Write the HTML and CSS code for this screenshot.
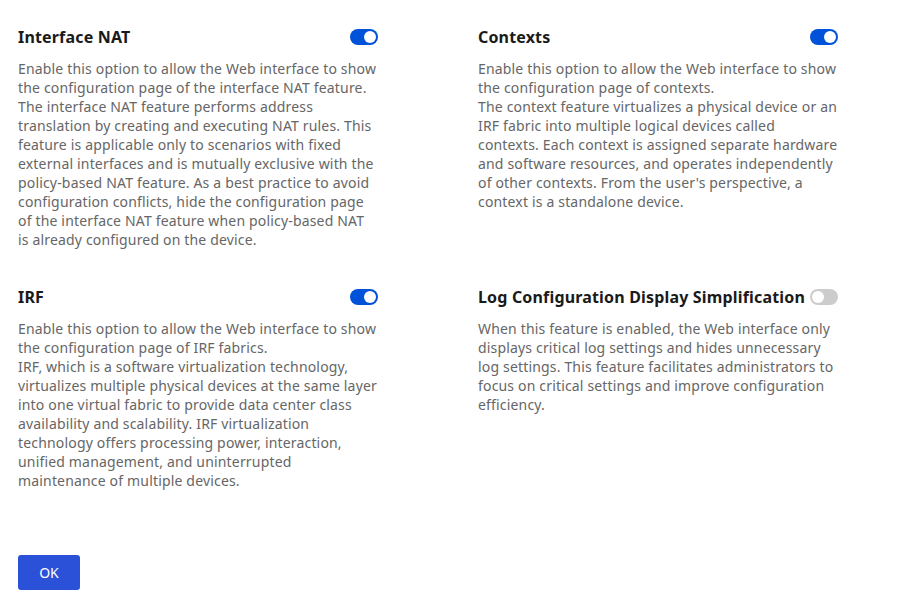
FILE: index.html
```html
<!DOCTYPE html>
<html lang="en">
<head>
  <meta charset="UTF-8" />
  <title>Feature Settings</title>
  <link rel="stylesheet" href="styles.css">
</head>
<body>
  <div class="grid">
    <section class="item">
      <div class="head">
        <h2>Interface NAT</h2>
        <span class="switch on"></span>
      </div>
      <p>Enable this option to allow the Web interface to show the configuration page of the interface NAT feature.<br>The interface NAT feature performs address translation by creating and executing NAT rules. This feature is applicable only to scenarios with fixed external interfaces and is mutually exclusive with the policy-based NAT feature. As a best practice to avoid configuration conflicts, hide the configuration page of the interface NAT feature when policy-based NAT is already configured on the device.</p>
    </section>

    <section class="item">
      <div class="head">
        <h2>Contexts</h2>
        <span class="switch on"></span>
      </div>
      <p>Enable this option to allow the Web interface to show the configuration page of contexts.<br>The context feature virtualizes a physical device or an IRF fabric into multiple logical devices called contexts. Each context is assigned separate hardware and software resources, and operates independently of other contexts. From the user's perspective, a context is a standalone device.</p>
    </section>

    <section class="item">
      <div class="head">
        <h2>IRF</h2>
        <span class="switch on"></span>
      </div>
      <p>Enable this option to allow the Web interface to show the configuration page of IRF fabrics.<br>IRF, which is a software virtualization technology, virtualizes multiple physical devices at the same layer into one virtual fabric to provide data center class availability and scalability. IRF virtualization technology offers processing power, interaction, unified management, and uninterrupted maintenance of multiple devices.</p>
    </section>

    <section class="item">
      <div class="head">
        <h2>Log Configuration Display Simplification</h2>
        <span class="switch"></span>
      </div>
      <p>When this feature is enabled, the Web interface only displays critical log settings and hides unnecessary log settings. This feature facilitates administrators to focus on critical settings and improve configuration efficiency.</p>
    </section>
  </div>

  <button class="ok">OK</button>
</body>
</html>
```

FILE: styles.css
```css
body {
  font-family: "Noto Sans", "Open Sans", sans-serif;
  margin: 0;
  padding: 27px 18px 0;
  background: #fff;
}

.grid {
  display: grid;
  grid-template-columns: 360px 360px;
  column-gap: 100px;
  row-gap: 38px;
  align-items: start;
}

.head {
  display: flex;
  align-items: center;
  justify-content: space-between;
  height: 20px;
  margin-bottom: 12px;
}

h2 {
  font-size: 16px;
  font-weight: bold;
  letter-spacing: 0.17px;
  color: #1a1a1a;
  margin: 0;
}

p {
  font-size: 14px;
  line-height: 19px;
  letter-spacing: 0.17px;
  color: #666;
  margin: 0;
}

.switch {
  position: relative;
  width: 28px;
  height: 16px;
  border-radius: 8px;
  background: #ccc;
  flex-shrink: 0;
}

.switch::after {
  content: "";
  position: absolute;
  top: 2px;
  left: 2px;
  width: 12px;
  height: 12px;
  border-radius: 50%;
  background: #fff;
}

.switch.on {
  background: #0052d9;
}

.switch.on::after {
  left: 14px;
}

.ok {
  display: block;
  margin-top: 65px;
  width: 62px;
  height: 35px;
  border: none;
  border-radius: 3px;
  background: #2b51d9;
  color: #fff;
  font-family: "Noto Sans", sans-serif;
  font-size: 14px;
  cursor: pointer;
}
```
